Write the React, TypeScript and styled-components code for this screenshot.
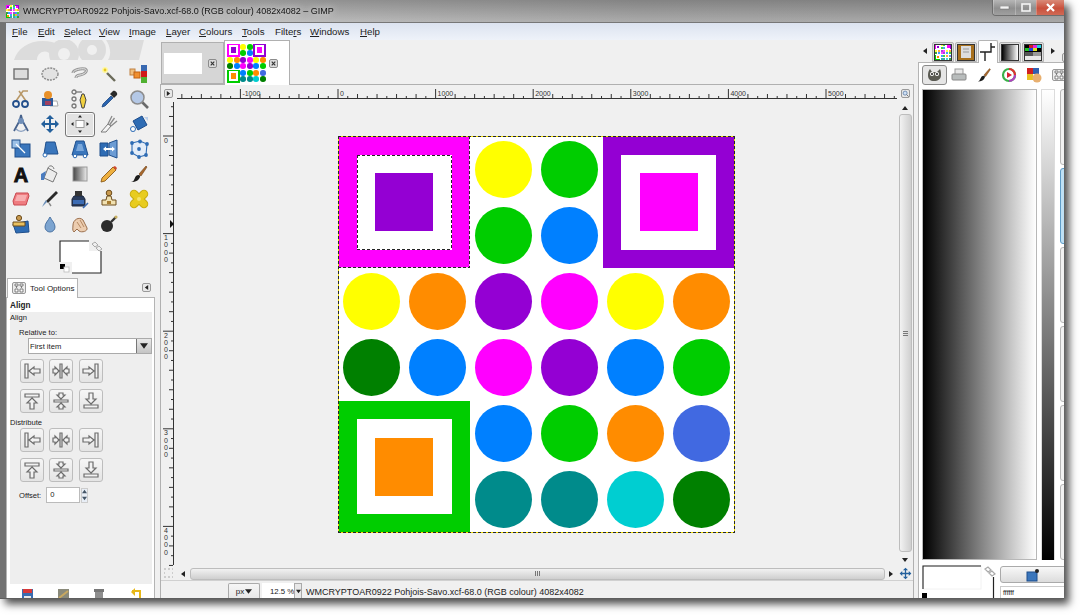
import React from "react";
import styled, { createGlobalStyle, css } from "styled-components";

const UI_FONT = `"Liberation Sans", Arial, sans-serif`;

const Global = createGlobalStyle`
  html, body {
    margin: 0;
    background: #fff;
    overflow: hidden;
  }
  body {
    width: 1080px;
    height: 615px;
    font-family: ${UI_FONT};
    font-size: 8px;
    color: #222;
  }
`;

const antsOverlay = (gap: string) => css`
  position: relative;
  &::after {
    content: "";
    position: absolute;
    inset: 0;
    z-index: 2;
    pointer-events: none;
    background:
      repeating-linear-gradient(90deg, #262626 0 3px, ${gap} 3px 5px) top / 100% 1px no-repeat,
      repeating-linear-gradient(90deg, #262626 0 3px, ${gap} 3px 5px) bottom / 100% 1px no-repeat,
      repeating-linear-gradient(180deg, #262626 0 3px, ${gap} 3px 5px) left / 1px 100% no-repeat,
      repeating-linear-gradient(180deg, #262626 0 3px, ${gap} 3px 5px) right / 1px 100% no-repeat;
  }
`;

const Win = styled.div`
  width: 1064px;
  height: 599px;
  box-sizing: border-box;
  display: flex;
  flex-direction: column;
  overflow: hidden;
  background: #8e8e8e;
  border-bottom: 1px solid #5e5e5e;
  box-shadow: 5px 5px 8px rgba(0, 0, 0, 0.7);
  filter: blur(0.35px);
`;

const TitleBar = styled.div`
  height: 22px;
  flex: none;
  display: flex;
  align-items: flex-start;
  padding-left: 6px;
  background:
    linear-gradient(180deg, rgba(0, 0, 0, 0.2), rgba(255, 255, 255, 0.08)),
    linear-gradient(90deg, #a8a8a8 0, #bcbcbc 25%, #b4b4b4 32%, #a4a4a4 60%, #a0a0a0 100%);
`;

const TitleIcon = styled.div`
  width: 13px;
  height: 13px;
  margin: 5px 4px 0 0;
  flex: none;
`;

const TitleText = styled.div`
  font-size: 9px;
  line-height: 23px;
  color: #141414;
  white-space: nowrap;
  text-shadow: 0 0 7px rgba(255, 255, 255, 0.9);
`;

const WinButtons = styled.div`
  margin-left: auto;
  display: flex;
  height: 15px;
  border: 1px solid #6e6e6e;
  border-top: 0;
  border-right: 0;
  border-radius: 0 0 0 4px;
  overflow: hidden;
`;

const WinButton = styled.div<{ $w: number; $close?: boolean }>`
  width: ${(p) => p.$w}px;
  display: flex;
  align-items: center;
  justify-content: center;
  border-left: 1px solid rgba(255, 255, 255, 0.25);
  background: ${(p) =>
    p.$close
      ? "linear-gradient(180deg, #d98a78, #c9503c 55%, #d06a55)"
      : "linear-gradient(180deg, #b6b6b6, #8f8f8f 55%, #a0a0a0)"};
`;

const Frame = styled.div`
  flex: 1;
  min-height: 0;
  display: flex;
  flex-direction: column;
  border-left: 6px solid #727272;
  border-top: 1px solid #777;
`;

const MenuBar = styled.div`
  height: 17px;
  flex: none;
  display: flex;
  align-items: center;
  padding-left: 6px;
  background: linear-gradient(180deg, #dce3f0, #eef2f9);
  font-size: 9.7px;
`;

const MenuItem = styled.div<{ $w: number }>`
  width: ${(p) => p.$w}px;
  flex: none;
  u {
    text-underline-offset: 1px;
  }
`;

const Body = styled.div`
  flex: 1;
  min-height: 0;
  display: flex;
  background: #f0f0f0;
`;

/* left dock */

const LeftDock = styled.div`
  width: 150px;
  flex: none;
  display: flex;
  flex-direction: column;
`;

const Watermark = styled.div`
  height: 21.5px;
  flex: none;
  padding-left: 8px;
`;

const ToolGrid = styled.div`
  display: grid;
  grid-template-columns: repeat(5, 29.5px);
  grid-auto-rows: 25px;
  flex: none;
`;

const ToolCell = styled.div<{ $active?: boolean }>`
  display: flex;
  align-items: center;
  justify-content: center;
  border-radius: 3px;
  border: 1px solid ${(p) => (p.$active ? "#777" : "transparent")};
  background: ${(p) => (p.$active ? "#e2e2e2" : "transparent")};
  box-shadow: ${(p) => (p.$active ? "inset 0 0 0 1px #fafafa" : "none")};
`;

const SwatchRow = styled.div`
  height: 40.5px;
  box-sizing: border-box;
  flex: none;
  padding: 3px 0 0 53px;
`;

const OptionsTabs = styled.div`
  height: 20px;
  flex: none;
  display: flex;
  align-items: center;
  justify-content: space-between;
  padding: 0 5px 0 1px;
`;

const OptionsTab = styled.div`
  width: 71px;
  height: 20px;
  display: flex;
  align-items: center;
  gap: 4px;
  padding-left: 4px;
  box-sizing: border-box;
  background: #fff;
  border: 1px solid #b4b4b4;
  border-bottom: 0;
  margin-bottom: -1px;
  position: relative;
  z-index: 1;
  font-size: 8px;
  white-space: nowrap;
`;

const TinyIconBox = styled.div`
  width: 12px;
  height: 10px;
  flex: none;
  display: flex;
  align-items: center;
  justify-content: center;
  border: 1px solid #999;
  border-radius: 2px;
  background: #ececec;
`;

const OptionsPanel = styled.div`
  flex: 1;
  min-height: 0;
  display: flex;
  flex-direction: column;
  background: #fff;
  border: 1px solid #b4b4b4;
  border-bottom: 0;
  margin-right: 1px;
  overflow: hidden;
`;

const OptionsHeading = styled.div`
  height: 14px;
  flex: none;
  padding-left: 3px;
  font-size: 8.2px;
  font-weight: 700;
  line-height: 15px;
`;

const OptionsBody = styled.div`
  flex: 1;
  margin: 0 2px 0 3px;
  background: #eeeeee;
  display: flex;
  flex-direction: column;
  font-size: 7.6px;
`;

const OptionLabel = styled.div<{ $indent?: number; $top?: number }>`
  padding-left: ${(p) => p.$indent ?? 0}px;
  margin-top: ${(p) => p.$top ?? 0}px;
  line-height: 11px;
`;

const ComboRow = styled.div`
  margin: 0.5px 0 0 18px;
  width: 124px;
  height: 16px;
  display: flex;
  background: #fff;
  border: 1px solid #aaa;
  box-sizing: border-box;
  align-items: center;
  padding-left: 1px;
  justify-content: space-between;
`;

const ComboArrow = styled.div`
  width: 14px;
  height: 14px;
  display: flex;
  align-items: center;
  justify-content: center;
  background: linear-gradient(180deg, #e8e8e8, #c4c4c4);
  border-left: 1px solid #777;
`;

const AlignGrid = styled.div<{ $top: number }>`
  margin: ${(p) => p.$top}px 0 0 9.5px;
  display: grid;
  grid-template-columns: repeat(3, 24px);
  grid-auto-rows: 24px;
  column-gap: 5.75px;
  row-gap: 6px;
`;

const AlignButton = styled.div`
  display: flex;
  align-items: center;
  justify-content: center;
  border: 1px solid #bdbdbd;
  border-radius: 3px;
  background: linear-gradient(180deg, #f6f6f6, #e4e4e4);
`;

const OffsetRow = styled.div`
  display: flex;
  align-items: center;
  margin: 5px 0 0 9px;
  gap: 5px;
`;

const SpinEntry = styled.div`
  width: 34px;
  height: 16px;
  box-sizing: border-box;
  background: #fff;
  border: 1px solid #bbb;
  padding-left: 3px;
  line-height: 14px;
`;

const SpinArrows = styled.div`
  width: 7px;
  height: 15px;
  box-sizing: border-box;
  display: flex;
  flex-direction: column;
  justify-content: space-around;
  align-items: center;
  border: 1px solid #ccc;
  background: #e8eef6;
  margin-left: -4px;
`;

const DockFooter = styled.div`
  height: 14px;
  box-sizing: border-box;
  flex: none;
  display: grid;
  grid-template-columns: repeat(4, 36px);
  padding: 4px 0 0 2px;
  justify-items: center;
  overflow: hidden;
`;

/* centre */

const Gutter = styled.div`
  width: 4px;
  flex: none;
`;

const Center = styled.div`
  width: 754px;
  flex: none;
  display: flex;
  flex-direction: column;
`;

const ImageTabs = styled.div`
  height: 44px;
  flex: none;
  display: flex;
  padding-left: 1px;
`;

const ImageTab = styled.div<{ $active?: boolean }>`
  width: ${(p) => (p.$active ? 66 : 63)}px;
  box-sizing: border-box;
  display: flex;
  align-items: center;
  gap: ${(p) => (p.$active ? 3 : 6)}px;
  padding-left: 2px;
  margin-top: ${(p) => (p.$active ? 0 : 2)}px;
  background: ${(p) => (p.$active ? "#fff" : "#d6d6d6")};
  border: 1px solid #b0b0b0;
  border-bottom: ${(p) => (p.$active ? "0" : "1px solid #b0b0b0")};
  margin-bottom: ${(p) => (p.$active ? "-1px" : "0")};
  position: relative;
  z-index: ${(p) => (p.$active ? 1 : 0)};
`;

const BlankPreview = styled.div`
  width: 38px;
  height: 21px;
  background: #fff;
`;

const ThumbBox = styled.div`
  flex: none;
`;

const CloseBox = styled.div`
  width: 9px;
  height: 9px;
  box-sizing: border-box;
  border: 1px solid #8c8c8c;
  border-radius: 2px;
  background: #dcdcdc;
  display: flex;
  align-items: center;
  justify-content: center;
`;

const ImagePanel = styled.div`
  flex: 1;
  min-height: 0;
  display: grid;
  grid-template-columns: 15px minmax(0, 1fr) 16px;
  grid-template-rows: 15px minmax(0, 1fr) 13px 18px;
  border: 1px solid #b0b0b0;
  border-bottom: 0;
  overflow: hidden;
`;

const CornerButton = styled.div<{ $flush?: boolean }>`
  display: flex;
  align-items: ${(p) => (p.$flush ? "center" : "flex-end")};
  justify-content: center;
  padding-bottom: ${(p) => (p.$flush ? 0 : 2)}px;
  box-sizing: border-box;
`;

const MiniButton = styled.div`
  width: 9px;
  height: 9px;
  flex: none;
  box-sizing: border-box;
  border: 1px solid #999;
  border-radius: 2px;
  background: #e8e8e8;
  display: flex;
  align-items: center;
  justify-content: center;
`;

const RulerCell = styled.div`
  overflow: hidden;
`;

const CanvasArea = styled.div`
  display: flex;
  align-items: center;
  justify-content: center;
  background: #f0f0f0;
  min-height: 0;
  padding-top: 2px;
  box-sizing: border-box;
`;

const ScrollV = styled.div`
  grid-row: 2;
  grid-column: 3;
  display: flex;
  flex-direction: column;
  align-items: center;
  padding: 3px 0 2px;
  box-sizing: border-box;
`;

const ScrollArrow = styled.div`
  height: 10px;
  flex: none;
  display: flex;
  align-items: center;
  justify-content: center;
`;

const ThumbV = styled.div`
  flex: 1;
  width: 13px;
  margin: 1px 0 3px;
  border: 1px solid #bdbdbd;
  border-radius: 3px;
  background: linear-gradient(90deg, #f2f2f2, #cfcfcf);
  display: flex;
  align-items: center;
  justify-content: center;
  box-sizing: border-box;
`;

const ScrollH = styled.div`
  grid-row: 3;
  grid-column: 2;
  display: flex;
  align-items: center;
`;

const ThumbH = styled.div`
  flex: 1;
  height: 12px;
  border: 1px solid #bdbdbd;
  border-radius: 3px;
  background: linear-gradient(180deg, #f2f2f2, #cfcfcf);
  display: flex;
  align-items: center;
  justify-content: center;
  box-sizing: border-box;
`;

const HArrow = styled.div<{ $w: number }>`
  width: ${(p) => p.$w}px;
  height: 11px;
  flex: none;
  display: flex;
  align-items: center;
  justify-content: center;
`;

const StatusBar = styled.div`
  grid-row: 4;
  grid-column: 1 / 4;
  display: flex;
  align-items: flex-start;
  padding: 2px 0 0 67px;
  border-top: 1px solid #d0d0d0;
  font-size: 9px;
`;

const UnitCombo = styled.div`
  width: 32px;
  height: 16px;
  box-sizing: border-box;
  border: 1px solid #aaa;
  border-bottom: 0;
  border-radius: 2px 2px 0 0;
  background: linear-gradient(180deg, #f6f6f6, #e6e6e6);
  display: flex;
  align-items: center;
  justify-content: center;
  gap: 1px;
  font-size: 8px;
  margin-right: 2px;
`;

const ZoomCombo = styled.div`
  width: 40px;
  height: 16px;
  box-sizing: border-box;
  display: flex;
  align-items: center;
  justify-content: space-between;
  background: #fff;
  font-size: 7.8px;
  padding-left: 8px;
  margin-right: 4px;
  white-space: nowrap;
`;

const ZoomArrow = styled.div`
  width: 8px;
  height: 16px;
  flex: none;
  box-sizing: border-box;
  border: 1px solid #aaa;
  border-bottom: 0;
  background: #e8e8e8;
  display: flex;
  align-items: center;
  justify-content: center;
`;

const StatusText = styled.div`
  line-height: 16px;
  margin-top: 1px;
  white-space: nowrap;
`;

/* artwork */

const Artwork = styled.div<{ $size: number; $ants?: boolean }>`
  width: ${(p) => p.$size}px;
  height: ${(p) => p.$size}px;
  flex: none;
  background: #fff;
  display: grid;
  grid-template-columns: repeat(6, 1fr);
  grid-template-rows: repeat(6, 1fr);
  ${(p) => p.$ants && antsOverlay("#f4e200")}
`;

const Slot = styled.div`
  display: flex;
  align-items: center;
  justify-content: center;
  min-width: 0;
  min-height: 0;
`;

const Dot = styled.div<{ $c: string }>`
  width: 86%;
  aspect-ratio: 1;
  border-radius: 50%;
  background: ${(p) => p.$c};
`;

const Square = styled.div<{ $c: string; $ants?: boolean }>`
  grid-column: span 2;
  grid-row: span 2;
  display: flex;
  align-items: center;
  justify-content: center;
  background: ${(p) => p.$c};
  ${(p) => p.$ants && antsOverlay("#ffb0ff")}
`;

const SquareInner = styled.div<{ $ants?: boolean }>`
  width: 72%;
  aspect-ratio: 1;
  background: #fff;
  display: flex;
  align-items: center;
  justify-content: center;
  ${(p) => p.$ants && antsOverlay("#fff")}
`;

const SquareCore = styled.div<{ $c: string }>`
  width: 61%;
  aspect-ratio: 1;
  background: ${(p) => p.$c};
`;

/* right dock */

const RightDock = styled.div`
  flex: 1;
  min-width: 0;
  margin-left: 4px;
  display: flex;
  flex-direction: column;
  overflow: hidden;
`;

const DockTabs = styled.div`
  height: 22px;
  flex: none;
  display: flex;
  align-items: flex-end;
  gap: 1px;
  padding-left: 1px;
`;

const TabArrow = styled.div<{ $w: number }>`
  width: ${(p) => p.$w}px;
  height: 22px;
  flex: none;
  display: flex;
  align-items: center;
  justify-content: center;
`;

const DockTab = styled.div<{ $active?: boolean }>`
  width: ${(p) => (p.$active ? 20 : 22)}px;
  height: ${(p) => (p.$active ? 23 : 20)}px;
  flex: none;
  box-sizing: border-box;
  border: 1px solid #b4b4b4;
  border-bottom: ${(p) => (p.$active ? 0 : "1px solid #b4b4b4")};
  border-radius: 2px 2px 0 0;
  background: ${(p) => (p.$active ? "#fff" : "#dedede")};
  display: flex;
  align-items: center;
  justify-content: center;
  margin-bottom: ${(p) => (p.$active ? "-1px" : "0")};
  position: relative;
  z-index: ${(p) => (p.$active ? 1 : 0)};
`;

const TabPreview = styled.div<{ $bg: string }>`
  width: 18px;
  height: 17px;
  box-sizing: border-box;
  border: 1px solid #333;
  background: ${(p) => p.$bg};
  display: flex;
  align-items: center;
  justify-content: center;
  overflow: hidden;
`;

const DockPanel = styled.div`
  flex: 1;
  min-height: 0;
  display: flex;
  flex-direction: column;
  background: #fff;
  border-left: 1px solid #b4b4b4;
  border-top: 1px solid #b4b4b4;
  padding-left: 3px;
`;

const DialogIcons = styled.div`
  height: 24px;
  flex: none;
  display: grid;
  grid-template-columns: 24px 25px 25px 25px 25px 26px;
  align-items: center;
  justify-items: center;
  margin-bottom: 2px;
`;

const DialogIcon = styled.div<{ $active?: boolean }>`
  width: 23px;
  height: 18px;
  display: flex;
  align-items: center;
  justify-content: center;
  border-radius: 3px;
  border: 1px solid ${(p) => (p.$active ? "#8a8a8a" : "transparent")};
  background: ${(p) => (p.$active ? "#e6e6e6" : "transparent")};
`;

const GradientRow = styled.div`
  height: 471px;
  flex: none;
  display: flex;
`;

const GradientH = styled.div`
  width: 115px;
  flex: none;
  box-sizing: border-box;
  border: 1px solid #b8b8b8;
  background: linear-gradient(90deg, #000 0, #555 33%, #a8a8a8 66%, #fff 100%);
`;

const GradientV = styled.div`
  width: 14px;
  flex: none;
  margin-left: 4px;
  box-sizing: border-box;
  border: 1px solid #dcdcdc;
  border-bottom: 0;
  background: linear-gradient(180deg, #fff, #000);
`;

const Stack = styled.div`
  flex: 1;
  margin-left: 5px;
  display: flex;
  flex-direction: column;
  gap: 3.5px;
`;

const StackButton = styled.div<{ $on?: boolean }>`
  flex: 1;
  width: 20px;
  box-sizing: border-box;
  border: 1px solid ${(p) => (p.$on ? "#5d9cc8" : "#b8b8b8")};
  border-radius: 3px;
  background: ${(p) => (p.$on ? "#bfe0f4" : "#f2f2f2")};
`;

const DockBottom = styled.div`
  flex: 1;
  min-height: 0;
  display: flex;
  align-items: flex-start;
  padding-top: 5px;
  overflow: hidden;
`;

const BottomSwatch = styled.div`
  width: 78px;
  flex: none;
`;

const BottomColumn = styled.div`
  flex: 1;
  display: flex;
  flex-direction: column;
  gap: 3px;
  padding-top: 1px;
`;

const WideButton = styled.div`
  height: 17px;
  width: 100px;
  flex: none;
  box-sizing: border-box;
  border: 1px solid #aaa;
  border-radius: 3px;
  background: linear-gradient(180deg, #f8f8f8, #dcdcdc);
  display: flex;
  align-items: center;
  padding-left: 25px;
`;

const HexEntry = styled.div`
  font-size: 7px;
  line-height: 12px;
  padding-left: 2px;
  border: 1px solid #ccc;
  border-bottom: 0;
  width: 100px;
  box-sizing: border-box;
`;

/* drawings */

const TOOL_GLYPHS: Record<string, React.ReactNode> = {
  rect: <rect x="3" y="5" width="14" height="10" fill="#dcdcdc" stroke="#6f6f6f" strokeWidth="1.4" />,
  ellipse: <ellipse cx="10" cy="10" rx="8" ry="6" fill="#e2e2e2" stroke="#8a8a8a" strokeWidth="1.4" strokeDasharray="2 1" />,
  lasso: (
    <>
      <path d="M3 9c0-3 8-5 12-4 3 1 1 5-5 6-3 .5-4 1-4 3" fill="none" stroke="#999" strokeWidth="3" />
      <path d="M3 9c0-3 8-5 12-4 3 1 1 5-5 6-3 .5-4 1-4 3" fill="none" stroke="#e4e4e4" strokeWidth="1" />
    </>
  ),
  wand: (
    <>
      <path d="M8 9l8 8" stroke="#6b6b5a" strokeWidth="2.4" />
      <circle cx="6" cy="6" r="3" fill="#fff7a0" />
      <circle cx="6" cy="6" r="1.4" fill="#e8c820" />
    </>
  ),
  color: (
    <>
      <rect x="1" y="5" width="5" height="6" fill="#f0c080" stroke="#c08040" />
      <rect x="5" y="8" width="6" height="6" fill="#f09030" stroke="#c06010" />
      <rect x="12" y="1" width="6" height="6" fill="#3868b0" />
      <rect x="12" y="7" width="6" height="6" fill="#d01818" />
      <rect x="12" y="13" width="6" height="6" fill="#50b030" />
    </>
  ),
  scissors: (
    <>
      <path d="M5 12L12 2h5M15 12L8 2" fill="none" stroke="#b89868" strokeWidth="1.6" />
      <circle cx="5" cy="15" r="3" fill="none" stroke="#24508c" strokeWidth="1.8" />
      <circle cx="14" cy="15" r="3" fill="none" stroke="#24508c" strokeWidth="1.8" />
    </>
  ),
  fgselect: (
    <>
      <path d="M11 12h6l1 5h-8z" fill="#fff" stroke="#aaa" />
      <path d="M2 9h11v8H2z" fill="#2c5898" />
      <circle cx="8" cy="6" r="4" fill="#e89028" />
      <path d="M5 12h6v4H5z" fill="#a04060" />
    </>
  ),
  paths: (
    <>
      <circle cx="4" cy="3" r="2" fill="none" stroke="#777" strokeWidth="1.3" />
      <circle cx="4" cy="10" r="2" fill="none" stroke="#777" strokeWidth="1.3" />
      <circle cx="4" cy="17" r="2" fill="none" stroke="#777" strokeWidth="1.3" />
      <path d="M6 3h6" stroke="#777" strokeWidth="1.3" />
      <path d="M10 11l2-6 2 0 2 6-2 8h-2z" fill="#f0d040" stroke="#444" strokeWidth="1" />
    </>
  ),
  picker: (
    <>
      <path d="M12 7L4 15l-1 3 3-1 8-8z" fill="#2a64b0" stroke="#1c4680" strokeWidth=".8" />
      <path d="M11 5l4 4 3-3c1-2-2-5-4-4z" fill="#2a2a2a" />
    </>
  ),
  zoom: (
    <>
      <path d="M13 13l6 6" stroke="#6a6a6a" strokeWidth="2.6" />
      <circle cx="8.5" cy="8.5" r="6.5" fill="#b4c8e6" stroke="#8c8c8c" strokeWidth="1.5" />
    </>
  ),
  measure: (
    <>
      <path d="M10 1l-1 4h2zM9 6L3 17M11 6l6 11" fill="none" stroke="#47628c" strokeWidth="1.8" />
      <circle cx="10" cy="7" r="3" fill="#6f8eb8" />
      <path d="M5 15c3 3 7 3 10 0" fill="none" stroke="#8aa0c0" strokeWidth="1.6" />
    </>
  ),
  move: <path d="M10 1l4 4h-3v4h4V6l4 4-4 4v-3h-4v4h3l-4 4-4-4h3v-4H5v3l-4-4 4-4v3h4V5H6z" fill="#24609c" />,
  align: (
    <>
      <rect x="6" y="6.5" width="8" height="7" fill="#fff" stroke="#888" strokeWidth=".8" />
      <path d="M10 1l2 2.5H8zM10 19l2-2.5H8zM1 10l2.5-2v4zM19 10l-2.5-2v4z" fill="#222" />
    </>
  ),
  crop: (
    <>
      <path d="M2 18l7-8 3 2-5 6z" fill="#f4f4f4" stroke="#7a7a7a" strokeWidth="1" />
      <path d="M9 10l4-8M10.500 11l5-7M12 12l6-5" fill="none" stroke="#8a8a8a" strokeWidth="1.3" />
    </>
  ),
  rotate: (
    <>
      <path d="M4 7l9-5 5 9-9 5z" fill="#2e6cb4" stroke="#1c4c8c" />
      <path d="M15 3h4v4zM2 13l4 5H2z" fill="#bcd0ea" />
      <circle cx="4" cy="15" r="2.5" fill="#fff" stroke="#2e6cb4" />
    </>
  ),
  scale: (
    <>
      <rect x="4" y="5" width="15" height="13" fill="#3a76bc" stroke="#1f4f8c" />
      <rect x="1" y="1" width="8" height="8" fill="#9cc0e6" stroke="#1f4f8c" />
      <path d="M5 5l9 9" stroke="#fff" strokeWidth="1.2" />
    </>
  ),
  shear: (
    <>
      <path d="M6 3h9l3 12H4z" fill="#3a76bc" stroke="#1f4f8c" />
      <circle cx="5" cy="16" r="2" fill="#fff" stroke="#2e6cb4" />
    </>
  ),
  perspective: (
    <>
      <path d="M6 2h8l4 14H2z" fill="#3a76bc" stroke="#1f4f8c" />
      <path d="M8 5h4l2 7H6z" fill="#7aa8dc" />
      <circle cx="5" cy="17" r="1.8" fill="#fff" stroke="#2e6cb4" />
      <circle cx="15" cy="17" r="1.8" fill="#fff" stroke="#2e6cb4" />
    </>
  ),
  flip: (
    <>
      <path d="M1 4h8v13H1z" fill="#2e6cb4" stroke="#1f4f8c" />
      <path d="M10 4l8-3v18l-8-3z" fill="#6c9cd4" stroke="#1f4f8c" />
      <path d="M4 10l3-2.500v5zM16 10l-3-2.500v5zM7 9h6v2H7z" fill="#fff" />
    </>
  ),
  cage: (
    <>
      <path d="M3 4l8-2 7 3-1 11-7 2-7-4z" fill="#e4edf8" stroke="#2e6cb4" strokeWidth="1.1" />
      {[[3, 4], [11, 2.500], [18, 5], [17, 16], [10, 18], [3, 14], [10, 10]].map(([x, y]) => (
        <circle key={`${x}-${y}`} cx={x} cy={y} r="1.900" fill="#2e6cb4" />
      ))}
    </>
  ),
  text: (
    <text x="10" y="17.500" textAnchor="middle" fontFamily={UI_FONT} fontWeight="700" fontSize="20" fill="#111" stroke="#111" strokeWidth=".9">
      A
    </text>
  ),
  bucket: (
    <>
      <path d="M8 4l9 5-4 9-9-4z" fill="#ececec" stroke="#777" />
      <path d="M8 4c1-3 5-3 6 1" fill="none" stroke="#777" />
      <path d="M6 7L1 10v6h3z" fill="#4a7cc0" />
    </>
  ),
  blend: (
    <>
      <defs>
        <linearGradient id="blendFill" x1="0" x2="1">
          <stop offset="0" stopColor="#444" />
          <stop offset="1" stopColor="#eee" />
        </linearGradient>
      </defs>
      <rect x="3" y="3" width="14" height="14" fill="url(#blendFill)" stroke="#999" />
    </>
  ),
  pencil: (
    <>
      <path d="M3 14L14 3l3 3L6 17l-4 1z" fill="#eeb040" stroke="#8a5a18" strokeWidth=".9" />
      <path d="M14 3l3 3 1-2-2-2z" fill="#d04830" />
    </>
  ),
  brush: (
    <>
      <path d="M10 10L17 2l1 1-6 9z" fill="#a8682c" stroke="#6c4018" strokeWidth=".6" />
      <path d="M2 18c3 0 3-3 5-6 2-2 5-1 4 1-1 3-4 5-9 5z" fill="#1c1c1c" />
    </>
  ),
  eraser: (
    <>
      <path d="M5 4h12l1 3-3 9H3L2 12z" fill="#ef7c80" stroke="#c84850" />
      <path d="M6 6h10l-2 6H4z" fill="#f8aeb0" />
    </>
  ),
  airbrush: (
    <>
      <path d="M6 12L16 2l2 2L8 14z" fill="#2a2a2a" />
      <path d="M7 13l-3 3-2 2 2-4 2-3z" fill="#6a8eb8" />
      <path d="M9 14l2 3" stroke="#888" strokeWidth="1.4" />
    </>
  ),
  ink: (
    <>
      <path d="M4 7h9l2 3v7H2v-7z" fill="#2a3c5c" stroke="#1c2840" />
      <rect x="5" y="2" width="7" height="5" fill="#333" />
      <path d="M3 11h11v4H3z" fill="#3c6cb4" />
      <path d="M13 19l5-5" stroke="#3c6cb4" strokeWidth="1.6" />
    </>
  ),
  clone: (
    <>
      <circle cx="10" cy="4" r="2.800" fill="#c89a50" stroke="#6c4c1c" />
      <path d="M8 7h4l1 4h4v5H3v-5h4z" fill="#f0e0b0" stroke="#6c4c1c" />
      <rect x="8" y="12" width="4" height="3" fill="#a87c30" />
    </>
  ),
  heal: (
    <>
      <path d="M5 5l10 10M15 5L5 15" stroke="#c8ac10" strokeWidth="8.500" strokeLinecap="round" />
      <path d="M5 5l10 10M15 5L5 15" stroke="#e8cc20" strokeWidth="6.500" strokeLinecap="round" />
      <circle cx="10" cy="10" r="2" fill="#f4e468" />
    </>
  ),
  pclone: (
    <>
      <path d="M2 10l15-3 1 11-13 1z" fill="#2e6cb4" stroke="#1f4f8c" />
      <circle cx="8" cy="4" r="2.600" fill="#c89a50" stroke="#6c4c1c" />
      <path d="M2 8h12v4H2z" fill="#e8c060" stroke="#6c4c1c" />
    </>
  ),
  blur: <path d="M10 3c2 4 5 6 5 10a5 5 0 0 1-10 0c0-4 3-6 5-10z" fill="#7ca4d0" stroke="#4c74a4" />,
  smudge: (
    <>
      <path d="M3 11c0-5 6-9 10-5l4 8c1 3-5 5-8 3l-2-2-3 3c-2-2-1-4-1-7z" fill="#eccdb0" stroke="#9a6e4c" />
      <path d="M7 8l4 6M10 6l4 7" stroke="#a87850" strokeWidth=".8" />
    </>
  ),
  dodge: (
    <>
      <circle cx="8" cy="12" r="6" fill="#2c2c2c" />
      <path d="M12 8l5-5" stroke="#333" strokeWidth="2.4" />
      <circle cx="17" cy="3" r="1.600" fill="#c8b060" />
    </>
  ),
};

const TOOLS = [
  "rect", "ellipse", "lasso", "wand", "color",
  "scissors", "fgselect", "paths", "picker", "zoom",
  "measure", "move", "align", "crop", "rotate",
  "scale", "shear", "perspective", "flip", "cage",
  "text", "bucket", "blend", "pencil", "brush",
  "eraser", "airbrush", "ink", "clone", "heal",
  "pclone", "blur", "smudge", "dodge",
];

const Glyph = ({ name, size = 20 }: { name: string; size?: number }) => (
  <svg width={size} height={size} viewBox="0 0 20 20">
    {TOOL_GLYPHS[name]}
  </svg>
);

const ALIGN_SHAPES = [
  "M2 2h3v14H2zM6 9l5-4v2h6v4h-6v2z",
  "M8 2h2v14H8zM7 9L3 5v2H1v4h2v2zM11 9l4-4v2h2v4h-2v2z",
  "M13 2h3v14h-3zM12 9L7 5v2H1v4h6v2z",
  "M2 2h14v3H2zM9 6l5 5h-3v6H7v-6H4z",
  "M2 8h14v2H2zM9 7L5 3h2V1h4v2h2zM9 11l4 4h-2v2H7v-2H5z",
  "M2 13h14v3H2zM9 12l5-5h-3V1H7v6H4z",
];

const AlignIcon = ({ kind }: { kind: number }) => (
  <svg width="18" height="18" viewBox="0 0 18 18">
    <path d={ALIGN_SHAPES[kind]} fill="#f2f2f2" stroke="#6c6c6c" strokeWidth="1.2" />
  </svg>
);

const Tri = ({ dir, size = 6, color = "#222" }: { dir: "up" | "down" | "left" | "right"; size?: number; color?: string }) => {
  const d = { up: "M0 5h6L3 1z", down: "M0 1h6L3 5z", left: "M5 0v6L1 3z", right: "M1 0v6l4-3z" }[dir];
  return (
    <svg width={size} height={size} viewBox="0 0 6 6">
      <path d={d} fill={color} />
    </svg>
  );
};

const CloseX = () => (
  <svg width="5" height="5" viewBox="0 0 7 7">
    <path d="M1 1l5 5M6 1L1 6" stroke="#333" strokeWidth="1.6" />
  </svg>
);

const Grip = ({ vertical }: { vertical?: boolean }) => (
  <svg width="7" height="7" viewBox="0 0 7 7">
    {vertical ? (
      <path d="M1 1.500h5M1 3.500h5M1 5.500h5" stroke="#777" />
    ) : (
      <path d="M1.500 1v5M3.500 1v5M5.500 1v5" stroke="#777" />
    )}
  </svg>
);

const UNIT = 9.76;

const HRuler = () => {
  const originX = 162;
  const ticks = [];
  for (let i = -16; i <= 57; i++) {
    const x = originX + i * UNIT;
    if (x < 0) continue;
    const major = i % 10 === 0;
    const h = major ? 9 : i % 2 === 0 ? 4 : 2;
    ticks.push(<path key={i} d={`M${x} 13V${13 - h}`} stroke="#333" strokeWidth="1" />);
  }
  return (
    <svg width="724" height="15" viewBox="0 0 724 15" style={{ display: "block" }}>
      <path d="M1 13.500H723" stroke="#333" strokeWidth="1" />
      {ticks}
      {[-1000, 0, 1000, 2000, 3000, 4000, 5000].map((v) => (
        <text key={v} x={originX + (v / 100) * UNIT + 2} y="10.500" fontSize="7" fontFamily={UI_FONT} fill="#333">
          {v}
        </text>
      ))}
    </svg>
  );
};

const VRuler = () => {
  const originY = 36;
  const ticks = [];
  for (let i = -3; i <= 44; i++) {
    const y = originY + i * UNIT;
    const major = i % 10 === 0;
    const w = major ? 10 : i % 2 === 0 ? 4 : 2;
    ticks.push(<path key={i} d={`M12 ${y}H${12 - w}`} stroke="#333" strokeWidth="1" />);
  }
  const labels = [0, 1000, 2000, 3000, 4000];
  return (
    <svg width="15" height="467" viewBox="0 0 15 467" style={{ display: "block" }}>
      <path d="M12.500 2V465" stroke="#333" strokeWidth="1" />
      {ticks}
      {labels.map((v) =>
        String(v)
          .split("")
          .map((ch, i) => (
            <text key={`${v}-${i}`} x="3" y={originY + (v / 100) * UNIT + 6.5 + i * 7.2} fontSize="7" fontFamily={UI_FONT} fill="#333">
              {ch}
            </text>
          )),
      )}
      <path d="M9 120l4 4-4 4z" fill="#111" />
    </svg>
  );
};

type Cell =
  | { kind: "dot"; c: string }
  | { kind: "square"; c: string; core: string; ants?: boolean };

const M = "#ff00ff";
const P = "#9400d3";
const Y = "#ffff00";
const G = "#00cd00";
const B = "#0080ff";
const O = "#ff8c00";
const D = "#008000";
const T = "#008b8b";
const C = "#00ced1";
const R = "#4169e1";

const dots = (...cs: string[]): Cell[] => cs.map((c) => ({ kind: "dot", c }));

const CELLS: Cell[] = [
  { kind: "square", c: M, core: P, ants: true },
  ...dots(Y, G),
  { kind: "square", c: P, core: M },
  ...dots(G, B),
  ...dots(Y, O, P, M, Y, O),
  ...dots(D, B, M, P, B, G),
  { kind: "square", c: G, core: O },
  ...dots(B, G, O, R),
  ...dots(T, T, C, D),
];

const Picture = ({ size, ants }: { size: number; ants?: boolean }) => (
  <Artwork $size={size} $ants={ants}>
    {CELLS.map((cell, i) =>
      cell.kind === "dot" ? (
        <Slot key={i}>
          <Dot $c={cell.c} />
        </Slot>
      ) : (
        <Square key={i} $c={cell.c} $ants={ants && cell.ants}>
          <SquareInner $ants={ants && cell.ants}>
            <SquareCore $c={cell.core} />
          </SquareInner>
        </Square>
      ),
    )}
  </Artwork>
);

const FgBg = () => (
  <svg width="46" height="36" viewBox="0 0 46 36" style={{ display: "block" }}>
    <rect x="13" y="11" width="29" height="22" fill="#fff" />
    <path d="M42 11v22H13" fill="none" stroke="#222" strokeWidth="1.1" />
    <rect x="1" y="1" width="29" height="21" fill="#fff" />
    <path d="M1 22V1h29" fill="none" stroke="#222" strokeWidth="1.1" />
    <rect x="1" y="24" width="5" height="5" fill="#000" />
    <rect x="5" y="27" width="5" height="5" fill="#fff" stroke="#bbb" strokeWidth=".8" />
    <path d="M33 4l3-2 3 3-3 2zM37 8l3-2 3 3-3 2z" fill="none" stroke="#aaa" strokeWidth="1" />
  </svg>
);

const DockFgBg = () => (
  <svg width="78" height="34" viewBox="0 0 78 34" style={{ display: "block" }}>
    <path d="M71.500 12V34" fill="none" stroke="#222" strokeWidth="1.2" />
    <rect x="1" y="1" width="58" height="23" fill="#fff" stroke="#f2f2f2" />
    <path d="M1 24V1h58" fill="none" stroke="#222" strokeWidth="1.1" />
    <rect x="0" y="28" width="5" height="5" fill="#000" />
    <path d="M63 4l3-2 3 3-3 2zM67 8l3-2 3 3-3 2z" fill="none" stroke="#aaa" strokeWidth="1.2" />
  </svg>
);

const WatermarkArt = () => (
  <svg width="130" height="20" viewBox="0 0 130 20">
    <path d="M0 20C4 6 20 -2 38 2c8 2 12 10 12 18H38c0-6-4-10-10-8-4 2-5 5-5 8z" fill="#dcdcdc" />
    <circle cx="50" cy="14" r="15" fill="#dcdcdc" />
    <circle cx="50" cy="14" r="6" fill="#f0f0f0" />
    <circle cx="78" cy="10" r="14" fill="#dcdcdc" />
    <circle cx="78" cy="10" r="5" fill="#f0f0f0" />
    <path d="M92 0h38l-5 20H94c4-6 2-14-2-20z" fill="#dcdcdc" />
  </svg>
);

const Wilber = () => (
  <svg width="16" height="14" viewBox="0 0 16 14">
    <path d="M2 7c0-3 1-5 2-6l2 3h5l3-3c1 2 1 4 1 6 0 4-3 6-7 6S2 11 2 7z" fill="#5a5a52" />
    <circle cx="6" cy="6" r="2" fill="#fff" />
    <circle cx="11" cy="6" r="2" fill="#fff" />
    <circle cx="6" cy="6" r=".9" fill="#000" />
    <circle cx="11" cy="6" r=".9" fill="#000" />
  </svg>
);

const ToolOptionsGlyph = () => (
  <svg width="10" height="10" viewBox="0 0 10 10">
    <path d="M1 1h3v2H1zM6 1h3v2H6zM2.500 3v2M7.500 3v2M1 6h3v3H1zM6 6h3v3H6z" fill="#fff" stroke="#666" strokeWidth=".8" />
  </svg>
);

const Printer = () => (
  <svg width="16" height="14" viewBox="0 0 16 14">
    <rect x="4" y="1" width="8" height="6" fill="#e8e8e8" stroke="#999" />
    <rect x="1" y="6" width="14" height="6" rx="1" fill="#b8bcbc" stroke="#888" />
  </svg>
);

const ColorWheel = () => (
  <svg width="16" height="16" viewBox="0 0 16 16">
    <circle cx="8" cy="8" r="6" fill="#fff" stroke="#38b048" strokeWidth="2.2" />
    <path d="M8 2a6 6 0 0 1 6 6" fill="none" stroke="#e03030" strokeWidth="2.2" />
    <path d="M14 8a6 6 0 0 1-6 6" fill="none" stroke="#b040c0" strokeWidth="2.2" />
    <path d="M6 5l5 3-5 3z" fill="#d82030" />
  </svg>
);

const SwatchGlyph = () => (
  <svg width="16" height="16" viewBox="0 0 16 16">
    <rect x="1" y="1" width="6" height="6" fill="#d02020" />
    <rect x="7" y="1" width="6" height="6" fill="#3060b0" />
    <rect x="1" y="7" width="6" height="6" fill="#e8c020" />
    <circle cx="11" cy="11" r="4.5" fill="#e8b070" />
  </svg>
);

const BrushGlyph = () => <Glyph name="brush" size={16} />;

const CrossLines = () => (
  <svg width="18" height="21" viewBox="0 0 18 21">
    <path d="M12 1v9H1M12 5h4M6 10v9" fill="none" stroke="#222" strokeWidth="1.4" />
  </svg>
);

const PaletteGlyph = () => (
  <svg width="16" height="15" viewBox="0 0 16 15">
    <rect width="16" height="15" fill="#000" />
    <rect x="4" y="0" width="4" height="3" fill="#d02020" />
    <rect x="8" y="0" width="4" height="3" fill="#e020e0" />
    <rect x="12" y="0" width="4" height="3" fill="#20d0e0" />
    <rect x="0" y="3" width="4" height="3" fill="#20c020" />
    <rect x="4" y="3" width="4" height="3" fill="#2040e0" />
    <rect x="8" y="3" width="4" height="3" fill="#e0e020" />
    <rect x="0" y="7" width="8" height="4" fill="#555" />
    <rect x="8" y="7" width="8" height="4" fill="#999" />
    <rect x="0" y="11" width="16" height="4" fill="#e8e8e8" />
  </svg>
);

const FOOTER_ICONS = [
  <svg key="save" width="11" height="14" viewBox="0 0 11 14"><rect x="0" y="1" width="11" height="13" fill="#3a6cb0" /><rect x="1" y="1" width="9" height="4" fill="#d83838" /><rect x="2" y="8" width="7" height="6" fill="#e8e8e8" /></svg>,
  <svg key="restore" width="11" height="14" viewBox="0 0 11 14"><rect x="0" y="1" width="11" height="13" fill="#8a8a7a" /><path d="M1 10l9-7" stroke="#c8a860" strokeWidth="2" /></svg>,
  <svg key="delete" width="10" height="14" viewBox="0 0 10 14"><rect x="0" y="1" width="10" height="3" fill="#777" /><rect x="1" y="4" width="8" height="10" fill="#8e8e8e" /></svg>,
  <svg key="reset" width="12" height="14" viewBox="0 0 12 14"><path d="M3 3h8v11H3" fill="none" stroke="#e8b818" strokeWidth="2" /><path d="M6 0L2 4l4 4z" fill="#e8b818" /><rect x="0" y="10" width="5" height="4" fill="#3a6cb0" /></svg>,
];

const TITLE = "WMCRYPTOAR0922 Pohjois-Savo.xcf-68.0 (RGB colour) 4082x4082";

const MENUS: [string, string, string, number][] = [
  ["", "F", "ile", 26],
  ["", "E", "dit", 26],
  ["", "S", "elect", 35],
  ["", "V", "iew", 30],
  ["", "I", "mage", 37],
  ["", "L", "ayer", 33],
  ["", "C", "olours", 43],
  ["", "T", "ools", 33],
  ["Filte", "r", "s", 35],
  ["", "W", "indows", 50],
  ["", "H", "elp", 30],
];

const App = () => (
  <>
    <Global />
    <Win>
      <TitleBar>
        <TitleIcon>
          <Picture size={13} />
        </TitleIcon>
        <TitleText>{TITLE} – GIMP</TitleText>
        <WinButtons>
          <WinButton $w={21}>
            <svg width="10" height="4" viewBox="0 0 10 4"><rect width="9" height="3" fill="#f4f4f4" stroke="#666" strokeWidth=".5" /></svg>
          </WinButton>
          <WinButton $w={20}>
            <svg width="10" height="9" viewBox="0 0 10 9"><rect x="1" y="1" width="8" height="7" fill="none" stroke="#f4f4f4" strokeWidth="1.6" /></svg>
          </WinButton>
          <WinButton $w={27} $close>
            <svg width="11" height="9" viewBox="0 0 11 9"><path d="M2 1l7 7M9 1L2 8" stroke="#fff" strokeWidth="2.2" /></svg>
          </WinButton>
        </WinButtons>
      </TitleBar>
      <Frame>
        <MenuBar>
          {MENUS.map(([pre, key, rest, w]) => (
            <MenuItem key={pre + key + rest} $w={w}>
              {pre}
              <u>{key}</u>
              {rest}
            </MenuItem>
          ))}
        </MenuBar>
        <Body>
          <LeftDock>
            <Watermark>
              <WatermarkArt />
            </Watermark>
            <ToolGrid>
              {TOOLS.map((t) => (
                <ToolCell key={t} $active={t === "align"}>
                  <Glyph name={t} />
                </ToolCell>
              ))}
            </ToolGrid>
            <SwatchRow>
              <FgBg />
            </SwatchRow>
            <OptionsTabs>
              <OptionsTab>
                <TinyIconBox>
                  <ToolOptionsGlyph />
                </TinyIconBox>
                Tool Options
              </OptionsTab>
              <MiniButton>
                <Tri dir="left" size={5} />
              </MiniButton>
            </OptionsTabs>
            <OptionsPanel>
              <OptionsHeading>Align</OptionsHeading>
              <OptionsBody>
                <OptionLabel>Align</OptionLabel>
                <OptionLabel $indent={9} $top={3.5}>Relative to:</OptionLabel>
                <ComboRow>
                  First item
                  <ComboArrow>
                    <Tri dir="down" size={8} />
                  </ComboArrow>
                </ComboRow>
                <AlignGrid $top={5}>
                  {[0, 1, 2, 3, 4, 5].map((k) => (
                    <AlignButton key={k}>
                      <AlignIcon kind={k} />
                    </AlignButton>
                  ))}
                </AlignGrid>
                <OptionLabel $top={3.5}>Distribute</OptionLabel>
                <AlignGrid $top={0.5}>
                  {[0, 1, 2, 3, 4, 5].map((k) => (
                    <AlignButton key={k}>
                      <AlignIcon kind={k} />
                    </AlignButton>
                  ))}
                </AlignGrid>
                <OffsetRow>
                  Offset:
                  <SpinEntry>0</SpinEntry>
                  <SpinArrows>
                    <Tri dir="up" size={5} color="#456" />
                    <Tri dir="down" size={5} color="#456" />
                  </SpinArrows>
                </OffsetRow>
              </OptionsBody>
              <DockFooter>{FOOTER_ICONS}</DockFooter>
            </OptionsPanel>
          </LeftDock>
          <Gutter />
          <Center>
            <ImageTabs>
              <ImageTab>
                <BlankPreview />
                <CloseBox>
                  <CloseX />
                </CloseBox>
              </ImageTab>
              <ImageTab $active>
                <ThumbBox>
                  <Picture size={39} />
                </ThumbBox>
                <CloseBox>
                  <CloseX />
                </CloseBox>
              </ImageTab>
            </ImageTabs>
            <ImagePanel>
              <CornerButton>
                <MiniButton>
                  <Tri dir="right" size={5} />
                </MiniButton>
              </CornerButton>
              <RulerCell>
                <HRuler />
              </RulerCell>
              <CornerButton>
                <MiniButton>
                  <svg width="7" height="7" viewBox="0 0 9 9">
                    <circle cx="4" cy="4" r="2.6" fill="#cfe0f4" stroke="#5a7ca8" />
                    <path d="M6 6l2.500 2.500" stroke="#555" />
                  </svg>
                </MiniButton>
              </CornerButton>
              <RulerCell>
                <VRuler />
              </RulerCell>
              <CanvasArea>
                <Picture size={397} ants />
              </CanvasArea>
              <ScrollV>
                <ScrollArrow>
                  <Tri dir="up" />
                </ScrollArrow>
                <ThumbV>
                  <Grip vertical />
                </ThumbV>
                <ScrollArrow>
                  <Tri dir="down" />
                </ScrollArrow>
              </ScrollV>
              <CornerButton $flush>
                <svg width="11" height="11" viewBox="0 0 11 11">
                  <path d="M1 1h2M5 1h2M9 1h1M1 5h1M9 5h1M1 9h2M5 9h2M9 9h1" stroke="#aaa" />
                </svg>
              </CornerButton>
              <ScrollH>
                <HArrow $w={14}>
                  <Tri dir="left" />
                </HArrow>
                <ThumbH>
                  <Grip />
                </ThumbH>
                <HArrow $w={12}>
                  <Tri dir="right" />
                </HArrow>
              </ScrollH>
              <CornerButton $flush>
                <svg width="13" height="13" viewBox="0 0 20 20">
                  {TOOL_GLYPHS.move}
                </svg>
              </CornerButton>
              <StatusBar>
                <UnitCombo>
                  px
                  <Tri dir="down" size={7} />
                </UnitCombo>
                <ZoomCombo>
                  12.5 %
                  <ZoomArrow>
                    <Tri dir="down" size={5} />
                  </ZoomArrow>
                </ZoomCombo>
                <StatusText>{TITLE}</StatusText>
              </StatusBar>
            </ImagePanel>
          </Center>
          <RightDock>
            <DockTabs>
              <TabArrow $w={12}>
                <Tri dir="left" />
              </TabArrow>
              <DockTab>
                <TabPreview $bg="#fff">
                  <Picture size={16} />
                </TabPreview>
              </DockTab>
              <DockTab>
                <TabPreview $bg="#a8701c">
                  <svg width="10" height="12" viewBox="0 0 10 12"><rect width="10" height="12" fill="#ddd" /><path d="M2 3h6M2 6h6" stroke="#999" /></svg>
                </TabPreview>
              </DockTab>
              <DockTab $active>
                <CrossLines />
              </DockTab>
              <DockTab>
                <TabPreview $bg="linear-gradient(90deg, #000, #fff)" />
              </DockTab>
              <DockTab>
                <TabPreview $bg="#000">
                  <PaletteGlyph />
                </TabPreview>
              </DockTab>
              <TabArrow $w={16}>
                <Tri dir="right" />
              </TabArrow>
              <MiniButton />
            </DockTabs>
            <DockPanel>
              <DialogIcons>
                <DialogIcon $active>
                  <Wilber />
                </DialogIcon>
                <DialogIcon>
                  <Printer />
                </DialogIcon>
                <DialogIcon>
                  <BrushGlyph />
                </DialogIcon>
                <DialogIcon>
                  <ColorWheel />
                </DialogIcon>
                <DialogIcon>
                  <SwatchGlyph />
                </DialogIcon>
                <TinyIconBox>
                  <ToolOptionsGlyph />
                </TinyIconBox>
              </DialogIcons>
              <GradientRow>
                <GradientH />
                <GradientV />
                <Stack>
                  <StackButton />
                  <StackButton $on />
                  <StackButton />
                  <StackButton />
                  <StackButton />
                  <StackButton />
                </Stack>
              </GradientRow>
              <DockBottom>
                <BottomSwatch>
                  <DockFgBg />
                </BottomSwatch>
                <BottomColumn>
                  <WideButton>
                    <svg width="14" height="14" viewBox="0 0 14 14">
                      <rect x="1" y="4" width="10" height="9" fill="#3a76bc" stroke="#1f4f8c" />
                      <circle cx="11" cy="3" r="2" fill="#222" />
                    </svg>
                  </WideButton>
                  <HexEntry>ffffff</HexEntry>
                </BottomColumn>
              </DockBottom>
            </DockPanel>
          </RightDock>
        </Body>
      </Frame>
    </Win>
  </>
);

export default App;
